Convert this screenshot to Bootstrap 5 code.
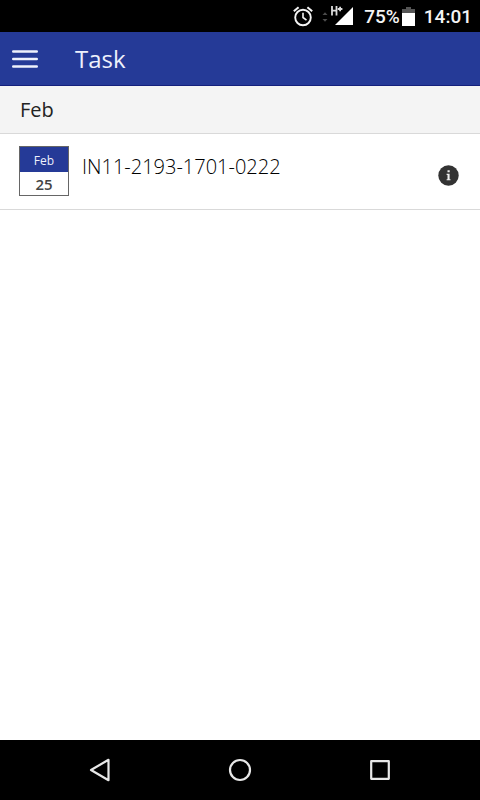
<!DOCTYPE html>
<html lang="en">
<head>
<meta charset="utf-8">
<meta name="viewport" content="width=device-width, initial-scale=1">
<title>Task</title>
<link href="https://cdn.jsdelivr.net/npm/bootstrap@5.3.0/dist/css/bootstrap.min.css" rel="stylesheet">
<style>
body { font-family: "Open Sans", "Noto Sans", sans-serif; color: #222; }
.status-bar { height: 32px; background: #000; color: #f4f4f4; font: 500 19px/30px Roboto, sans-serif; padding: 2px 8px 0 0; }
.status-bar svg, .app-bar svg, .info-btn svg, .system-nav svg { display: block; }
.alarm-icon { margin-right: 9px; }
.battery-icon { margin: 0 9px 0 2px; }
.signal-icon { margin-right: 11px; }
.app-bar { height: 54px; background: #253a97; border-bottom: 1px solid #14207c; padding: 0 12px; gap: 37px; }
.app-title { font-size: 24px; line-height: 32px; color: #eef1fc; }
.month-heading { height: 48px; background: #f4f4f4; border-bottom: 1px solid #d9d9d9; padding: 0 20px; font-size: 20px; line-height: 47px; }
.task-row { height: 76px; border-bottom: 1px solid #d9d9d9; padding: 12px 21px 12px 19px; gap: 13px; }
.date-tile { width: 50px; height: 50px; border: 1px solid #666; text-align: center; }
.date-month { height: 25px; background: #253a97; color: #eef1fc; font-size: 12px; line-height: 27px; }
.date-day { font-size: 15px; line-height: 24px; font-weight: 600; color: #444; }
.task-code { font-size: 20px; line-height: 42px; font-weight: 300; color: #000; }
.info-btn { margin-top: 19px; }
.system-nav { height: 60px; background: #000; padding: 0 30px; }
</style>
<script src="https://cdn.jsdelivr.net/npm/bootstrap@5.3.0/dist/js/bootstrap.bundle.min.js"></script>
</head>
<body class="d-flex flex-column min-vh-100 bg-white">
<div class="status-bar d-flex align-items-center justify-content-end">
  <svg class="alarm-icon" width="20" height="22" viewBox="0 0 20 22" fill="none" stroke="#f4f4f4" aria-hidden="true">
    <circle cx="10" cy="11.500" r="7.8" stroke-width="1.9"/>
    <path d="M10 6.8V11.500l3.5 2.600" stroke-width="1.6"/>
    <path d="M.8 5.2 5.6 1.200M19.200 5.2 14.4 1.200" stroke-width="2"/>
  </svg>
  <svg class="signal-icon" width="31" height="22" viewBox="0 0 31 22" aria-hidden="true">
    <path d="M.5 9 3 6.200 5.500 9zM.5 13 3 15.800 5.500 13z" fill="#4c4c4c"/>
    <path d="M31 1v18H13z" fill="#fff"/>
    <path d="M10 0v9.500M14.500 0v9.500M10 4.700h4.500M15.800 3h4.600M18.100 .7v4.600" fill="none" stroke="#ddd" stroke-width="1.800"/>
  </svg>
  <span>75%</span>
  <svg class="battery-icon" width="13" height="20" viewBox="0 0 13 20" aria-hidden="true">
    <path d="M4 0h5v2h4v4H0V2h4z" fill="#555"/>
    <path d="M0 6h13v13H0z" fill="#fff"/>
  </svg>
  <span>14:01</span>
</div>
<header class="app-bar d-flex align-items-center">
  <button type="button" class="btn p-0 border-0" aria-label="Open menu">
    <svg width="26" height="20" viewBox="0 0 26 20" stroke="#eef1fc" stroke-width="2.400" stroke-linecap="round" aria-hidden="true"><path d="M1.200 2.500h23.600M1.200 10h23.600M1.200 17.500h23.600"/></svg>
  </button>
  <h1 class="app-title fw-normal m-0">Task</h1>
</header>
<main class="flex-grow-1">
  <h2 class="month-heading fw-normal m-0">Feb</h2>
  <ul class="list-unstyled m-0">
    <li class="task-row d-flex align-items-start">
      <div class="date-tile flex-shrink-0">
        <div class="date-month">Feb</div>
        <div class="date-day">25</div>
      </div>
      <div class="task-code flex-grow-1">IN11-2193-1701-0222</div>
      <button type="button" class="info-btn btn p-0 border-0 rounded-circle" aria-label="Task details">
        <svg width="21" height="21" viewBox="0 0 21 21" aria-hidden="true"><circle cx="10.500" cy="10.500" r="10.200" fill="#333"/><path d="M9.500 5.200h2.200v2H9.500zM8.600 8.800h3v5.400h.9v1.100H8.600v-1.100h.9V9.900h-.9z" fill="#eee"/></svg>
      </button>
    </li>
  </ul>
</main>
<nav class="system-nav d-flex align-items-stretch" aria-label="System">
  <button type="button" class="btn flex-fill p-0 border-0 d-flex align-items-center justify-content-center" aria-label="Back">
    <svg width="24" height="24" viewBox="0 0 24 24" fill="none" stroke="#e8e8e8" stroke-width="2.200" stroke-linejoin="round" aria-hidden="true"><path d="M20.500 1.800v20.400L3 12z"/></svg>
  </button>
  <button type="button" class="btn flex-fill p-0 border-0 d-flex align-items-center justify-content-center" aria-label="Home">
    <svg width="24" height="24" viewBox="0 0 24 24" fill="none" stroke="#e8e8e8" stroke-width="2.200" aria-hidden="true"><circle cx="12" cy="12" r="10"/></svg>
  </button>
  <button type="button" class="btn flex-fill p-0 border-0 d-flex align-items-center justify-content-center" aria-label="Recent apps">
    <svg width="24" height="24" viewBox="0 0 24 24" fill="none" stroke="#e8e8e8" stroke-width="2.200" stroke-linejoin="round" aria-hidden="true"><path d="M3.200 3.200h17.600v17.600H3.200z"/></svg>
  </button>
</nav>
</body>
</html>
